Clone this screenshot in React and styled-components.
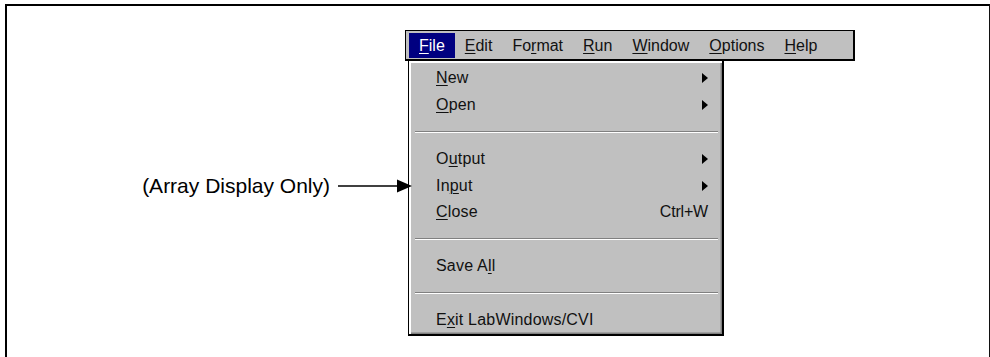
import React from 'react';
import styled, { createGlobalStyle } from 'styled-components';

const GlobalStyle = createGlobalStyle`
  html, body {
    margin: 0;
    padding: 0;
    background: #ffffff;
  }
  body {
    font-family: "Liberation Sans", Arial, sans-serif;
    color: #000;
    overflow: hidden;
  }
`;

const Frame = styled.div`
  box-sizing: border-box;
  margin: 4px 0 0 5px;
  width: 985px;
  height: 353px;
  border-top: 2px solid #000;
  border-left: 2px solid #000;
  border-right: 1px solid #111;
  padding-top: 24px;
  display: flex;
  align-items: flex-start;
`;

const Callout = styled.div`
  position: relative;
  z-index: 1;
  width: 398px;
  height: 24px;
  margin-top: 144px;
  display: flex;
  align-items: center;
  justify-content: flex-end;
  gap: 8px;
`;

const CalloutLabel = styled.span`
  font-size: 21px;
  line-height: 24px;
  white-space: nowrap;
`;

const CalloutArrow = styled.svg`
  display: block;
  flex: none;
  margin-right: -7px;
`;

const MenuWindow = styled.div`
  display: flex;
  flex-direction: column;
  width: 450px;
`;

const MenuBar = styled.div`
  box-sizing: border-box;
  height: 31px;
  display: flex;
  align-items: stretch;
  padding: 2px 0 1px 3px;
  background: #c0c0c0;
  border-top: 1px solid #000;
  border-left: 1px solid #000;
  border-right: 2px solid #000;
  border-bottom: 2px solid #000;
`;

const BarItem = styled.div`
  display: flex;
  align-items: center;
  padding: 0 10px;
  font-size: 16px;
  background: ${p => (p.$active ? '#000080' : 'transparent')};
  color: ${p => (p.$active ? '#fff' : '#111')};
`;

const Key = styled.span`
  text-decoration: underline;
  text-decoration-thickness: 1px;
  text-underline-offset: 2px;
`;

const Dropdown = styled.div`
  box-sizing: border-box;
  margin-left: 3px;
  width: 316px;
  padding: 4px 0 1px;
  background: #c0c0c0;
  color: #111;
  border-left: 1px solid #000;
  border-right: 2px solid #000;
  border-bottom: 2px solid #000;
  box-shadow: inset 2px 2px 0 #fff, inset -1.5px -1.5px 0 #808080;
`;

const Item = styled.div`
  height: 26.8px;
  display: flex;
  align-items: center;
  justify-content: space-between;
  padding: 0 14px 0 27px;
  font-size: 16px;
  letter-spacing: 0.2px;
`;

const Shortcut = styled.span`
  font-size: 16px;
  letter-spacing: -0.2px;
`;

const Separator = styled.div`
  height: 26.8px;
  display: flex;
  align-items: center;
  padding: 0 4px 0 6px;
`;

const Rule = styled.div`
  flex: 1;
  height: 0;
  border-top: 1.5px solid #808080;
  border-bottom: 1.5px solid #fff;
`;

const SubArrow = () => (
  <svg width="6" height="10" viewBox="0 0 6 10">
    <polygon points="0,0 6,5 0,10" fill="#000" />
  </svg>
);

const label = (text, key) => {
  if (key == null) return text;
  return (
    <>
      {text.slice(0, key)}
      <Key>{text[key]}</Key>
      {text.slice(key + 1)}
    </>
  );
};

const barItems = [
  ['File', 0],
  ['Edit', 0],
  ['Format', 2],
  ['Run', 0],
  ['Window', 0],
  ['Options', 0],
  ['Help', 0],
];

const menuRows = [
  { text: 'New', key: 0, sub: true },
  { text: 'Open', key: 0, sub: true },
  { sep: true },
  { text: 'Output', key: 1, sub: true },
  { text: 'Input', key: 2, sub: true },
  { text: 'Close', key: 0, shortcut: 'Ctrl+W' },
  { sep: true },
  { text: 'Save All', key: 6 },
  { sep: true },
  { text: 'Exit LabWindows/CVI', key: 1 },
];

export default function App() {
  return (
    <>
      <GlobalStyle />
      <Frame>
        <Callout>
          <CalloutLabel>(Array Display Only)</CalloutLabel>
          <CalloutArrow width="74" height="16" viewBox="0 0 74 16">
            <line x1="0" y1="8" x2="62" y2="8" stroke="#000" strokeWidth="1.5" />
            <polygon points="59,1.5 74,8 59,14.5" fill="#000" />
          </CalloutArrow>
        </Callout>
        <MenuWindow>
          <MenuBar>
            {barItems.map(([text, key], i) => (
              <BarItem key={text} $active={i === 0}>
                {label(text, key)}
              </BarItem>
            ))}
          </MenuBar>
          <Dropdown>
            {menuRows.map((row, i) =>
              row.sep ? (
                <Separator key={i}>
                  <Rule />
                </Separator>
              ) : (
                <Item key={i}>
                  <span>{label(row.text, row.key)}</span>
                  {row.sub && <SubArrow />}
                  {row.shortcut && <Shortcut>{row.shortcut}</Shortcut>}
                </Item>
              )
            )}
          </Dropdown>
        </MenuWindow>
      </Frame>
    </>
  );
}
